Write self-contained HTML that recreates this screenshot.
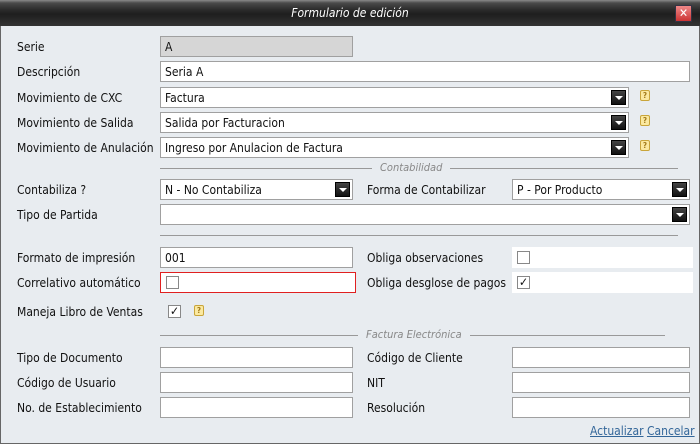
<!DOCTYPE html>
<html><head><meta charset="utf-8"><style>
*{margin:0;padding:0;box-sizing:border-box}
body{width:700px;height:444px;overflow:hidden;background:#e8ecf0;font-family:"DejaVu Sans Condensed","Liberation Sans",sans-serif;font-size:12px;color:#111;position:relative}
.win{position:absolute;left:0;top:0;width:700px;height:444px;border:1px solid #666;border-top:none}
.title{position:absolute;left:0;top:0;width:700px;height:26px;background:linear-gradient(#8a8a8a 0,#4a4a4a 3px,#2a2a2a 10px,#1e1e1e 14px,#333 26px);color:#fff;font-style:italic;text-align:center;line-height:26px;font-size:12px}
.close{position:absolute;left:675px;top:5px;width:17px;height:17px;background:linear-gradient(#e88,#c33);border:1px solid #334;color:#fff;font-size:12px;line-height:14px;text-align:center;font-style:normal}
.l{position:absolute;font-size:12px;margin-top:1px}
.i{position:absolute;background:#fff;border:1px solid #a0a0a0;height:21px;padding-left:4px;line-height:20px}
.dd{position:absolute;right:2px;top:2px;width:15px;height:15px;background:linear-gradient(#444,#111);border:1px solid #000}
.dd:after{content:"";position:absolute;left:3px;top:5px;border-left:4px solid transparent;border-right:4px solid transparent;border-top:4px solid #fff}
.q{position:absolute;width:10px;height:11px;border:1px solid #c9a53a;background:#fbe9a0;border-radius:2px;font-size:8px;line-height:9px;text-align:center;color:#a07818;font-weight:bold}
.cb{position:absolute;width:13px;height:13px;border:1px solid #888;background:#fff;font-size:12px;line-height:11px;text-align:center}
.hr{position:absolute;height:1px;background:#999}
.leg{position:absolute;font-style:italic;color:#888;font-size:11px;background:#e8ecf0;padding:0 8px}
.w{position:absolute;background:#fff;height:21px}
a{color:#336699;text-decoration:underline}
</style></head><body>
<div class="win"></div>
<div class="title">Formulario de edición<div class="close">✕</div></div>

<div class="l" style="left:17px;top:39px">Serie</div>
<div class="i" style="left:160px;top:36px;width:193px;background:#d6d6d6">A</div>
<div class="l" style="left:17px;top:64px">Descripción</div>
<div class="i" style="left:160px;top:61px;width:530px">Seria A</div>
<div class="l" style="left:17px;top:90px">Movimiento de CXC</div>
<div class="i" style="left:160px;top:87px;width:469px">Factura<div class="dd"></div></div>
<div class="q" style="left:640px;top:90px">?</div>
<div class="l" style="left:17px;top:115px">Movimiento de Salida</div>
<div class="i" style="left:160px;top:112px;width:469px">Salida por Facturacion<div class="dd"></div></div>
<div class="q" style="left:640px;top:115px">?</div>
<div class="l" style="left:17px;top:140px">Movimiento de Anulación</div>
<div class="i" style="left:160px;top:137px;width:469px">Ingreso por Anulacion de Factura<div class="dd"></div></div>
<div class="q" style="left:640px;top:140px">?</div>

<div class="hr" style="left:160px;top:168px;width:518px"></div>
<div class="leg" style="left:372px;top:161px">Contabilidad</div>

<div class="l" style="left:17px;top:182px">Contabiliza ?</div>
<div class="i" style="left:160px;top:179px;width:193px">N - No Contabiliza<div class="dd"></div></div>
<div class="l" style="left:367px;top:182px">Forma de Contabilizar</div>
<div class="i" style="left:512px;top:179px;width:178px">P - Por Producto<div class="dd"></div></div>
<div class="l" style="left:17px;top:207px">Tipo de Partida</div>
<div class="i" style="left:160px;top:204px;width:530px"><div class="dd"></div></div>

<div class="hr" style="left:160px;top:235px;width:518px"></div>

<div class="l" style="left:17px;top:250px">Formato de impresión</div>
<div class="i" style="left:160px;top:247px;width:193px">001</div>
<div class="l" style="left:367px;top:250px">Obliga observaciones</div>
<div class="w" style="left:512px;top:247px;width:181px"></div>
<div class="cb" style="left:517px;top:251px"></div>
<div class="l" style="left:17px;top:275px">Correlativo automático</div>
<div class="i" style="left:160px;top:272px;width:196px;border-color:#e02020"></div>
<div class="cb" style="left:166px;top:276px"></div>
<div class="l" style="left:367px;top:275px">Obliga desglose de pagos</div>
<div class="w" style="left:512px;top:272px;width:181px"></div>
<div class="cb" style="left:517px;top:276px">✓</div>

<div class="l" style="left:17px;top:304px">Maneja Libro de Ventas</div>
<div class="cb" style="left:168px;top:305px">✓</div>
<div class="q" style="left:194px;top:305px">?</div>

<div class="hr" style="left:160px;top:335px;width:505px"></div>
<div class="leg" style="left:358px;top:328px">Factura Electrónica</div>

<div class="l" style="left:17px;top:350px">Tipo de Documento</div>
<div class="i" style="left:160px;top:347px;width:193px"></div>
<div class="l" style="left:367px;top:350px">Código de Cliente</div>
<div class="i" style="left:512px;top:347px;width:178px"></div>
<div class="l" style="left:17px;top:375px">Código de Usuario</div>
<div class="i" style="left:160px;top:372px;width:193px"></div>
<div class="l" style="left:367px;top:375px">NIT</div>
<div class="i" style="left:512px;top:372px;width:178px"></div>
<div class="l" style="left:17px;top:400px">No. de Establecimiento</div>
<div class="i" style="left:160px;top:397px;width:193px"></div>
<div class="l" style="left:367px;top:400px">Resolución</div>
<div class="i" style="left:512px;top:397px;width:178px"></div>

<div class="l" style="left:590px;top:423px"><a>Actualizar</a> <a>Cancelar</a></div>
</body></html>
